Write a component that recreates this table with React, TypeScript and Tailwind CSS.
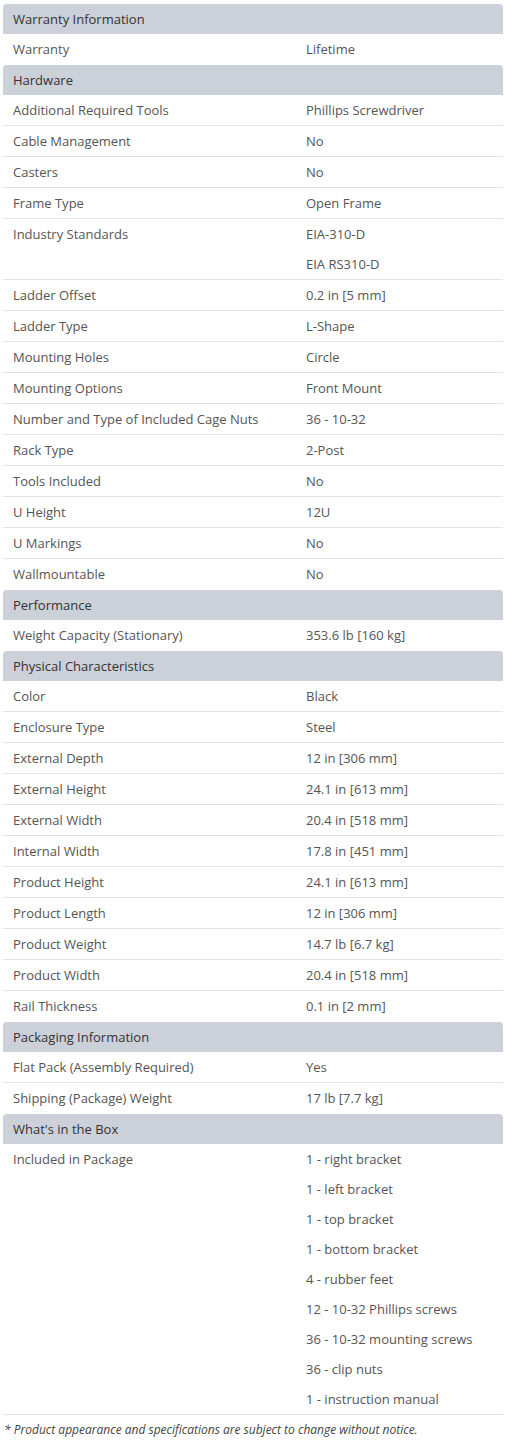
import React from "react";

type Row = { label: string; values: string[] };
type Section = { title: string; rows: Row[] };

const sections: Section[] = [
  { title: "Warranty Information", rows: [{ label: "Warranty", values: ["Lifetime"] }] },
  {
    title: "Hardware",
    rows: [
      { label: "Additional Required Tools", values: ["Phillips Screwdriver"] },
      { label: "Cable Management", values: ["No"] },
      { label: "Casters", values: ["No"] },
      { label: "Frame Type", values: ["Open Frame"] },
      { label: "Industry Standards", values: ["EIA-310-D", "EIA RS310-D"] },
      { label: "Ladder Offset", values: ["0.2 in [5 mm]"] },
      { label: "Ladder Type", values: ["L-Shape"] },
      { label: "Mounting Holes", values: ["Circle"] },
      { label: "Mounting Options", values: ["Front Mount"] },
      { label: "Number and Type of Included Cage Nuts", values: ["36 - 10-32"] },
      { label: "Rack Type", values: ["2-Post"] },
      { label: "Tools Included", values: ["No"] },
      { label: "U Height", values: ["12U"] },
      { label: "U Markings", values: ["No"] },
      { label: "Wallmountable", values: ["No"] },
    ],
  },
  { title: "Performance", rows: [{ label: "Weight Capacity (Stationary)", values: ["353.6 lb [160 kg]"] }] },
  {
    title: "Physical Characteristics",
    rows: [
      { label: "Color", values: ["Black"] },
      { label: "Enclosure Type", values: ["Steel"] },
      { label: "External Depth", values: ["12 in [306 mm]"] },
      { label: "External Height", values: ["24.1 in [613 mm]"] },
      { label: "External Width", values: ["20.4 in [518 mm]"] },
      { label: "Internal Width", values: ["17.8 in [451 mm]"] },
      { label: "Product Height", values: ["24.1 in [613 mm]"] },
      { label: "Product Length", values: ["12 in [306 mm]"] },
      { label: "Product Weight", values: ["14.7 lb [6.7 kg]"] },
      { label: "Product Width", values: ["20.4 in [518 mm]"] },
      { label: "Rail Thickness", values: ["0.1 in [2 mm]"] },
    ],
  },
  {
    title: "Packaging Information",
    rows: [
      { label: "Flat Pack (Assembly Required)", values: ["Yes"] },
      { label: "Shipping (Package) Weight", values: ["17 lb [7.7 kg]"] },
    ],
  },
  {
    title: "What's in the Box",
    rows: [
      {
        label: "Included in Package",
        values: [
          "1 - right bracket",
          "1 - left bracket",
          "1 - top bracket",
          "1 - bottom bracket",
          "4 - rubber feet",
          "12 - 10-32 Phillips screws",
          "36 - 10-32 mounting screws",
          "36 - clip nuts",
          "1 - instruction manual",
        ],
      },
    ],
  },
];

export default function App() {
  return (
    <div
      className="w-[506px] h-[1441px] bg-white px-[3px] pt-[4px] text-[13px] text-[#555]"
      style={{ fontFamily: '"Open Sans", "Liberation Sans", sans-serif' }}
    >
      <div className="w-[500px]">
        {sections.map((s, si) => (
          <div key={si}>
            <div className="h-[30px] rounded-t-[4px] bg-[#ccd0d9] pl-[10px] pt-[2px] flex items-center text-[#333]">
              {s.title}
            </div>
            {s.rows.map((r, ri) => {
              const last = ri === s.rows.length - 1 && si !== sections.length - 1;
              return (
                <div
                  key={ri}
                  className={`flex border-b ${last ? "border-transparent" : "border-[#e3e3e3]"}`}
                >
                  <div className="w-[303px] pl-[10px] h-[30px] pt-[2px] flex items-center">{r.label}</div>
                  <div className="flex-1 flex flex-col">
                    {r.values.map((v, vi) => (
                      <div key={vi} className="h-[30px] pt-[2px] flex items-center">
                        {v}
                      </div>
                    ))}
                  </div>
                </div>
              );
            })}
          </div>
        ))}
      </div>
      <div className="pl-[1px] pt-[6px] text-[12px] italic text-[#444]">
        * Product appearance and specifications are subject to change without notice.
      </div>
    </div>
  );
}
